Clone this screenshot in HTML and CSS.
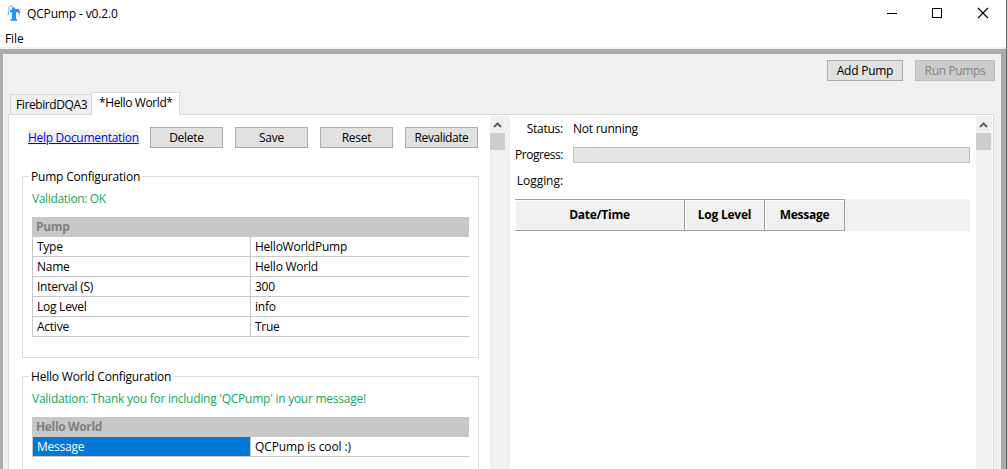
FILE: index.html
```html
<!DOCTYPE html>
<html lang="en">
<head>
<meta charset="utf-8">
<title>QCPump - v0.2.0</title>
<link rel="stylesheet" href="styles.css">
</head>
<body>
<div class="window">
  <header class="titlebar">
    <svg class="logo" width="14" height="17" viewBox="0 0 14 17"><path d="M1.2 10.5L2 3Q2.4 1 4 1Q6 1 6 3.5" fill="none" stroke="#8cc8f8" stroke-width="1.3"/><path d="M5 2.5h3V4h4v1.5h1v3h-1.5V7.3H9V14h1v1.8H3.5V14H5V7.3H3V5h2z" fill="#1e96f4"/><path d="M12.3 9.5v2" stroke="#74bcf6" stroke-width="1.2"/></svg>
    <span class="title">QCPump - v0.2.0</span>
    <svg class="controls" width="104" height="12" viewBox="0 0 104 12" fill="none" stroke="#000" shape-rendering="crispEdges"><path d="M0 6.5h10M45.5 1.5h9v9h-9z"/><path d="M91 1l10 10M101 1l-10 10" shape-rendering="auto" stroke-width="1.1"/></svg>
  </header>
  <nav class="menu"><span>File</span></nav>
  <main class="client">
    <div class="toolbar"><button class="btn add">Add Pump</button><button class="btn run" disabled>Run Pumps</button></div>
    <div class="tabs"><span class="tab">FirebirdDQA3</span><span class="tab active">*Hello World*</span></div>
    <div class="page">
      <section class="config">
        <div class="actions"><a class="help">Help Documentation</a><button class="btn">Delete</button><button class="btn">Save</button><button class="btn">Reset</button><button class="btn reval">Revalidate</button></div>
        <fieldset class="group">
          <legend class="lg1">Pump Configuration</legend>
          <p class="valid v1">Validation: OK</p>
          <div class="grid">
            <div class="cat">Pump</div>
            <div class="row"><span class="key">Type</span><span>HelloWorldPump</span></div>
            <div class="row"><span class="key">Name</span><span>Hello World</span></div>
            <div class="row"><span class="key">Interval (S)</span><span>300</span></div>
            <div class="row"><span class="key">Log Level</span><span>info</span></div>
            <div class="row"><span class="key">Active</span><span>True</span></div>
          </div>
        </fieldset>
        <fieldset class="group">
          <legend class="lg2">Hello World Configuration</legend>
          <p class="valid">Validation: Thank you for including 'QCPump' in your message!</p>
          <div class="grid">
            <div class="cat">Hello World</div>
            <div class="row"><span class="key selected">Message</span><span class="wide">QCPump is cool :)</span></div>
          </div>
        </fieldset>
      </section>
      <div class="scroll left"><svg width="15" height="17" viewBox="0 0 15 17"><path d="M4 11l3.5-3.5L11 11" fill="none" stroke="#606060" stroke-width="2"/></svg><div class="thumb"></div></div>
      <section class="status">
        <div class="line"><label>Status:</label><span>Not running</span></div>
        <div class="line"><label class="tight">Progress:</label><div class="bar"></div></div>
        <div class="line"><label class="wide">Logging:</label></div>
        <div class="log"><span class="th date">Date/Time</span><span class="th">Log Level</span><span class="th">Message</span></div>
      </section>
      <div class="scroll right"><svg width="15" height="17" viewBox="0 0 15 17"><path d="M4 11l3.5-3.5L11 11" fill="none" stroke="#606060" stroke-width="2"/></svg><div class="thumb"></div></div>
    </div>
  </main>
</div>
</body>
</html>
```
FILE: styles.css
```css
* { box-sizing: border-box; }
body { margin: 0; background: #fff; color: #000; font: 12px/16px "Open Sans", "Noto Sans", sans-serif; letter-spacing: -0.25px; overflow: hidden; }
.window { width: 1007px; height: 469px; display: flex; flex-direction: column; border-right: 1px solid #666; white-space: nowrap; }
.titlebar { height: 27px; flex: none; display: flex; padding: 5px 15px 0 7px; }
.logo { flex: none; margin-right: 6px; }
.title { padding-top: 1px; letter-spacing: -0.15px; }
.controls { margin: 2px 0 0 auto; }
.menu { height: 22px; flex: none; padding: 4px 5px 0; border-bottom: 2px solid #f0f0f0; letter-spacing: -0.1px; }
.client { flex: 1; min-height: 0; display: flex; flex-direction: column; background: #f0f0f0; border: solid #ababab; border-width: 5px 5px 0 3px; }
.toolbar { height: 38px; flex: none; display: flex; justify-content: flex-end; gap: 12px; padding: 6px 6px 0 0; }
.btn { width: 73px; height: 21px; flex: none; padding: 1px 0 0; border: 1px solid #adadad; background: #e1e1e1; color: #000; font: inherit; letter-spacing: inherit; line-height: 18px; text-align: center; }
.add { width: 76px; }
.run { width: 80px; background: #ccc; border-color: #bfbfbf; color: #838383; letter-spacing: -0.35px; }
.reval { letter-spacing: -0.4px; }
.tabs { height: 22px; flex: none; display: flex; align-items: flex-end; padding-left: 7px; }
.tab { width: 81px; height: 20px; border: 1px solid #d9d9d9; border-width: 1px 0 0 1px; padding: 2px 0 0 5px; letter-spacing: -0.4px; }
.tab.active { position: relative; z-index: 1; width: 89px; height: 23px; margin-bottom: -1px; background: #fff; border-right-width: 1px; padding: 2px 0 0 7px; letter-spacing: -0.4px; }
.page { flex: 1; min-height: 0; margin: 0 7px 0 5px; border: solid #d9d9d9; border-width: 1px 1px 0; background: #fff; display: flex; overflow: hidden; }
.config { width: 481px; flex: none; padding: 12px 11px 0 13px; }
.actions { display: flex; gap: 12px; padding-left: 6px; }
.help { width: 111px; height: 15px; margin: 3px -1px 0 0; background: #f0f0f0; color: #00f; line-height: 15px; letter-spacing: -0.3px; text-decoration: underline; }
.group { position: relative; height: 182px; min-width: 0; margin: 28px 0 0; border: 1px solid #dcdcdc; padding: 14px 9px 0; }
.group + .group { margin-top: 18px; }
legend { position: absolute; top: -8px; left: 6px; padding: 0 2px; background: #fff; line-height: 16px; letter-spacing: -0.2px; }
.valid { margin: 0 0 10px; line-height: 16px; color: #14a85c; }
.v1 { letter-spacing: -0.35px; }
.grid { border-left: 1px solid #c8c8c8; }
.cat { height: 20px; margin-left: -1px; padding-left: 4px; background: #c8c8c8; color: #808080; font-weight: 700; line-height: 19px; letter-spacing: -0.35px; }
.row { height: 20px; display: flex; border-bottom: 1px solid #c8c8c8; line-height: 19px; }
.key { width: 218px; flex: none; border-right: 1px solid #c8c8c8; margin-right: 4px; padding-left: 4px; }
.selected { background: #0078d7; color: #fff; }
.wide { letter-spacing: -0.12px; }
.tight { letter-spacing: -0.45px; }
.scroll { flex: none; margin-top: 1px; background: #f0f0f0; }
.scroll.left { width: 20px; }
.scroll.right { width: 16px; margin-right: 1px; }
.scroll svg { display: block; }
.thumb { width: 15px; height: 17px; background: #cdcdcd; }
.status { flex: 1; min-width: 0; padding: 1px 6px 0 5px; }
.line { height: 26px; display: flex; align-items: center; }
.line label { width: 48px; margin-right: 10px; display: flex; justify-content: flex-end; }
.line label.wide { letter-spacing: -0.05px; }
.bar { flex: 1; height: 16px; border: 1px solid #bcbcbc; background: #e6e6e6; }
.log { height: 32px; margin-top: 5px; background: #f0f0f0; display: flex; }
.th { width: 80px; border: 1px solid #a0a0a0; border-left: 0; box-shadow: inset 1px 1px #fff; text-align: center; font-weight: 700; line-height: 30px; }
.date { width: 170px; }
```
